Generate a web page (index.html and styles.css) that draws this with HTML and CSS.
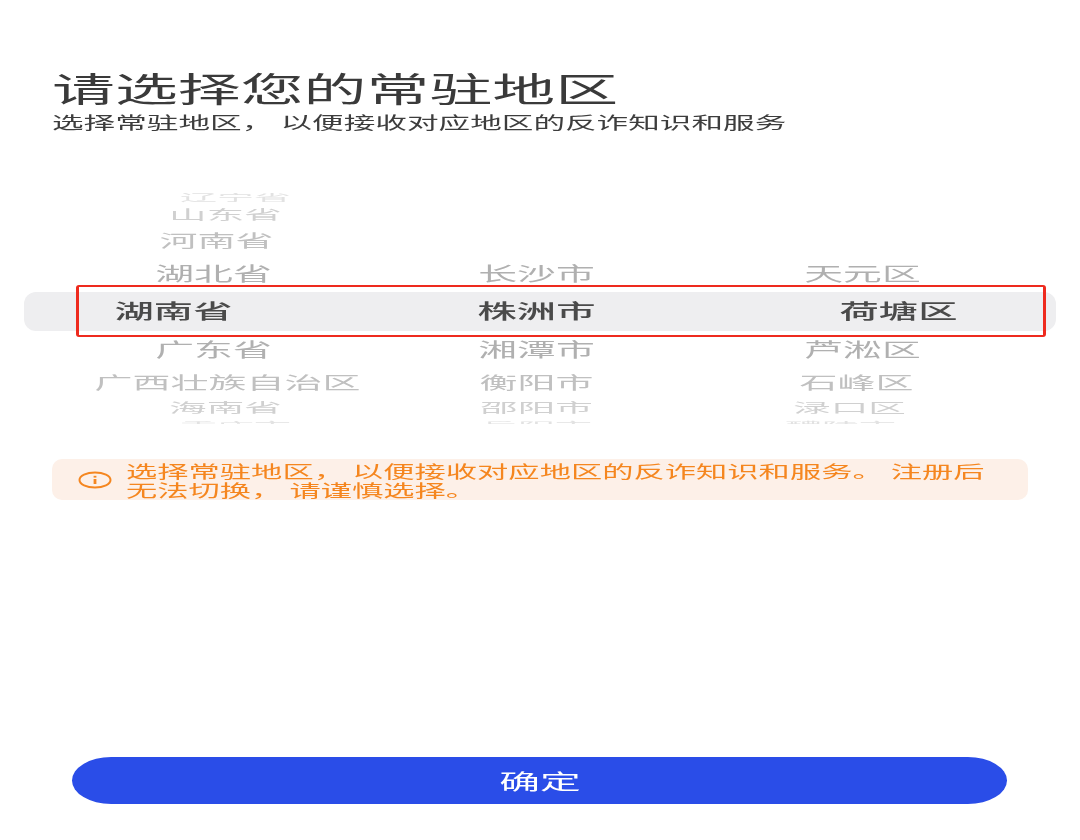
FILE: index.html
```html
<!DOCTYPE html>
<html lang="zh-CN">
<head>
    <meta charset="UTF-8">
    <meta name="viewport" content="width=device-width, initial-scale=1.0">
    <title>请选择您的常驻地区</title>
    <link rel="stylesheet" href="styles.css">
</head>
<body>
    <div class="page">
        <div class="header">
            <h1 class="title"><span class="stretch">请选择您的常驻地区</span></h1>
            <p class="subtitle"><span class="stretch">选择常驻地区， 以便接收对应地区的反诈知识和服务</span></p>
        </div>

        <div class="wheel">
            <div class="wheel-row row-edge-top">
                <span class="cell shift-top">辽宁省</span>
            </div>
            <div class="wheel-row row-far lift-far">
                <span class="cell shift-far">山东省</span>
            </div>
            <div class="wheel-row row-mid lift-mid">
                <span class="cell shift-mid">河南省</span>
            </div>
            <div class="wheel-row row-near lift-near">
                <span class="cell">湖北省</span>
                <span class="cell">长沙市</span>
                <span class="cell">天元区</span>
            </div>
            <div class="wheel-row row-selected">
                <span class="cell shift-selected-left">湖南省</span>
                <span class="cell">株洲市</span>
                <span class="cell shift-selected-right">荷塘区</span>
            </div>
            <div class="wheel-row row-near">
                <span class="cell">广东省</span>
                <span class="cell">湘潭市</span>
                <span class="cell">芦淞区</span>
            </div>
            <div class="wheel-row row-mid">
                <span class="cell shift-wide">广西壮族自治区</span>
                <span class="cell">衡阳市</span>
                <span class="cell shift-mid-right">石峰区</span>
            </div>
            <div class="wheel-row row-far lift-near">
                <span class="cell shift-far">海南省</span>
                <span class="cell">邵阳市</span>
                <span class="cell shift-far-right">渌口区</span>
            </div>
            <div class="wheel-row row-edge-bottom">
                <span class="cell shift-top">重庆市</span>
                <span class="cell">岳阳市</span>
                <span class="cell shift-edge-right">醴陵市</span>
            </div>
            <div class="selection-box"></div>
        </div>

        <div class="notice">
            <svg class="notice-icon" viewBox="0 0 34 18" preserveAspectRatio="none">
                <ellipse cx="17" cy="9" rx="15.5" ry="7.5" fill="none" stroke="#f5861f" stroke-width="2"/>
                <rect x="15.6" y="8" width="2.8" height="5" fill="#f5861f"/>
                <rect x="15.6" y="4.8" width="2.8" height="1.8" fill="#f5861f"/>
            </svg>
            <div class="notice-text">
                <span class="stretch">选择常驻地区， 以便接收对应地区的反诈知识和服务。 注册后</span>
                <span class="stretch">无法切换， 请谨慎选择。</span>
            </div>
        </div>

        <button class="confirm-button"><span class="stretch-center">确定</span></button>
    </div>
</body>
</html>
```

FILE: styles.css
```css
* {
    margin: 0;
    padding: 0;
    box-sizing: border-box;
}

body {
    font-family: "Noto Sans CJK SC", "Noto Sans", sans-serif;
    background: #fff;
    overflow: hidden;
}

.page {
    height: 840px;
    display: flex;
    flex-direction: column;
    padding-top: 68px;
    overflow: hidden;
    filter: blur(0.4px);
}

/* the whole screenshot is stretched sideways, so the text is too */
.stretch {
    display: block;
    width: max-content;
    white-space: pre;
    transform-origin: left center;
}

.header {
    padding-left: 52px;
    height: 125px;
}

.title {
    font-size: 34px;
    font-weight: 400;
    line-height: 40px;
    color: #3a3a3a;
    margin-bottom: 2px;
}

.title .stretch {
    transform: scaleX(1.85);
}

.subtitle {
    font-size: 17px;
    line-height: 24px;
    color: #3d3d3d;
}

.subtitle .stretch {
    transform: scaleX(1.86);
}

/* picker */
.wheel {
    position: relative;
    height: 231px;
    overflow: hidden;
}

.wheel-row {
    display: grid;
    grid-template-columns: 426px 220px 432px;
    align-items: center;
    align-content: center;
    justify-items: center;
    overflow: hidden;
    font-size: 21px;
    line-height: 12px;
}

.cell {
    display: block;
    white-space: nowrap;
}

.row-edge-top {
    height: 12px;
    padding-bottom: 4px;
    color: #e2e2e2;
}

.row-edge-top .cell {
    transform: scale(1.76, 0.42);
}

.row-far {
    height: 22px;
    color: #d0d0d0;
}

.row-far .cell {
    transform: scale(1.79, 0.62);
}

.row-mid {
    height: 29px;
    color: #c0c0c0;
}

.row-mid .cell {
    transform: scale(1.81, 0.8);
}

.row-near {
    height: 36px;
    color: #b0b0b0;
}

.row-near .cell {
    transform: scale(1.85, 0.9);
}

/* rows above the band and the lower far row sit a little higher */
.lift-far {
    padding-bottom: 6px;
}

.lift-mid {
    padding-bottom: 4px;
}

.lift-near {
    padding-bottom: 3px;
}

.row-selected {
    height: 39px;
    margin: 0 24px;
    padding-bottom: 3px;
    grid-template-columns: 402px 220px 408px;
    background: #eeeef0;
    border-radius: 12px;
    color: #4a4a4a;
    font-weight: 500;
}

.row-selected .cell {
    transform: scale(1.87, 0.95);
}

.row-edge-bottom {
    height: 9px;
    align-items: start;
    align-content: start;
    line-height: 14px;
    color: #e2e2e2;
}

.row-edge-bottom .cell {
    transform: scale(1.76, 0.42);
}

/* sideways drift of the wheel columns */
.shift-top {
    margin-left: 44px;
}

.shift-far {
    margin-left: 24px;
}

.shift-mid {
    margin-left: 6px;
}

.shift-wide {
    margin-left: 28px;
}

.shift-selected-left {
    margin-left: -104px;
}

.shift-selected-right {
    margin-left: 96px;
}

.shift-mid-right {
    margin-left: -12px;
}

.shift-far-right {
    margin-left: -26px;
}

.shift-edge-right {
    margin-left: -44px;
}

/* red annotation drawn over the picker */
.selection-box {
    position: absolute;
    left: 76px;
    top: 92px;
    width: 970px;
    height: 52px;
    border: 2px solid #ee2a1e;
    border-left-width: 3px;
    border-right-width: 3px;
    border-radius: 3px;
}

.notice {
    display: flex;
    align-items: center;
    gap: 14px;
    width: 976px;
    height: 41px;
    margin: 35px 0 0 52px;
    padding-left: 26px;
    background: #fdf0e8;
    border-radius: 10px;
}

.notice-icon {
    width: 34px;
    height: 18px;
    flex-shrink: 0;
}

.notice-text {
    font-size: 17px;
    line-height: 19px;
    color: #f5861f;
}

.notice-text .stretch {
    transform: scaleX(1.84);
}

.confirm-button {
    display: flex;
    align-items: center;
    justify-content: center;
    width: 935px;
    height: 47px;
    margin: auto 0 36px 72px;
    padding-bottom: 2px;
    background: #2a4de8;
    border: none;
    border-radius: 40px / 24px;
    color: #fff;
    font-family: inherit;
    font-size: 21px;
}

.stretch-center {
    display: block;
    transform: scaleX(1.94);
}
```
